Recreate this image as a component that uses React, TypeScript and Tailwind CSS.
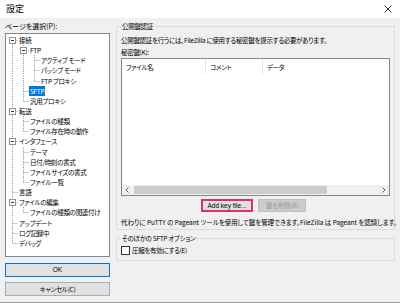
import React from 'react';

type Node = { t: string; l: number; kids?: boolean; last?: boolean; sel?: boolean };

const TREE: Node[] = [
  { t: '接続', l: 1, kids: true },
  { t: 'FTP', l: 2, kids: true },
  { t: 'アクティブ モード', l: 3 },
  { t: 'パッシブ モード', l: 3 },
  { t: 'FTP プロキシ', l: 3, last: true },
  { t: 'SFTP', l: 2, sel: true },
  { t: '汎用プロキシ', l: 2, last: true },
  { t: '転送', l: 1, kids: true },
  { t: 'ファイルの種類', l: 2 },
  { t: 'ファイル存在時の動作', l: 2, last: true },
  { t: 'インタフェース', l: 1, kids: true },
  { t: 'テーマ', l: 2 },
  { t: '日付/時刻の書式', l: 2 },
  { t: 'ファイルサイズの書式', l: 2 },
  { t: 'ファイル一覧', l: 2, last: true },
  { t: '言語', l: 1 },
  { t: 'ファイルの編集', l: 1, kids: true },
  { t: 'ファイルの種類の関連付け', l: 2, last: true },
  { t: 'アップデート', l: 1 },
  { t: 'ログ記録中', l: 1 },
  { t: 'デバッグ', l: 1, last: true },
];

const COL = 11;
const ROW_H = 10.15;

// which ancestor columns still need a vertical guide line
function guides() {
  const lastAt: Record<number, boolean> = {};
  return TREE.map((n) => {
    const g: boolean[] = [];
    for (let c = 1; c < n.l; c++) g.push(!lastAt[c]);
    lastAt[n.l] = !!n.last;
    return g;
  });
}

function Connector({ n, g, first }: { n: Node; g: boolean[]; first: boolean }) {
  const w = n.l * COL;
  const mid = 5.5;
  const cx = (n.l - 1) * COL + 5.5;
  const line = { stroke: '#a0a0a0', strokeWidth: 1, strokeDasharray: '1 1' };
  return (
    <svg width={w} height={ROW_H} className="shrink-0">
      {g.map((on, i) => on && <line key={i} x1={i * COL + 5.5} y1={0} x2={i * COL + 5.5} y2={ROW_H} {...line} />)}
      {!first && <line x1={cx} y1={0} x2={cx} y2={mid} {...line} />}
      {!n.last && <line x1={cx} y1={mid} x2={cx} y2={ROW_H} {...line} />}
      <line x1={cx} y1={mid} x2={w} y2={mid} {...line} />
      {n.kids && (
        <g>
          <rect x={cx - 3} y={mid - 3} width={6} height={6} fill="#fff" stroke="#919191" strokeWidth={1} />
          <line x1={cx - 1.5} y1={mid} x2={cx + 1.5} y2={mid} stroke="#333" strokeWidth={1} />
        </g>
      )}
    </svg>
  );
}

function Chevron({ dir }: { dir: 'l' | 'r' }) {
  return (
    <svg width="4" height="6" viewBox="0 0 4 6">
      <path d={dir === 'l' ? 'M3.5 0.5 L1 3 L3.5 5.5' : 'M0.5 0.5 L3 3 L0.5 5.5'} fill="none" stroke="#606060" strokeWidth="1" />
    </svg>
  );
}

export default function App() {
  const g = guides();
  const latin = "font-['Liberation_Sans','Noto_Sans_CJK_JP',sans-serif] tracking-normal";

  return (
    <div className="flex h-[303px] w-[400px] flex-col overflow-hidden bg-[#f0f0f0] font-['Noto_Sans_CJK_JP',sans-serif] text-[6.5px] leading-[10px] tracking-[-0.3px] text-black [font-feature-settings:'palt']">
      <div className="flex h-[18px] shrink-0 items-center justify-between bg-white pl-[6px] pr-[8px]">
        <span className="text-[9px] tracking-normal">設定</span>
        <svg width="8" height="8" viewBox="0 0 8 8">
          <path d="M0.5 0.5 L7.5 7.5 M7.5 0.5 L0.5 7.5" stroke="#333" strokeWidth="1" />
        </svg>
      </div>

      <div className="flex flex-1 gap-[6px] border-b border-[#a0a0a0] px-[5px] pt-[2px]">
        <div className="flex w-[105px] shrink-0 flex-col">
          <div className="flex h-[12px] items-center tracking-normal text-[7px]">ページを選択(P):</div>
          <div className="mt-[1px] h-[224px] border border-[#828790] bg-white pl-[1px] pt-[1px]">
            {TREE.map((n, i) => (
              <div key={n.t} className="flex h-[10.15px] items-center whitespace-nowrap">
                <Connector n={n} g={g[i]} first={i === 0} />
                <span className={`flex h-[10px] items-center px-[1px] ${n.sel ? 'bg-[#0078d7] text-white' : ''}`}>{n.t}</span>
              </div>
            ))}
          </div>
          <button className={`mt-[6px] h-[14px] border border-[#0078d7] bg-[#e1e1e1] ${latin}`}>OK</button>
          <button className="mt-[5px] h-[14px] border border-[#adadad] bg-[#e1e1e1]">キャンセル(C)</button>
        </div>

        <div className="flex min-w-0 flex-1 flex-col">
          <fieldset className="h-[210px] min-w-0 border border-[#dcdcdc] px-[4px]">
            <legend className="h-[12px] px-[1px] leading-[12px]">公開鍵認証</legend>
            <div className="mt-[3px] h-[10px] whitespace-nowrap">公開鍵認証を行うには、FileZilla に使用する秘密鍵を提示する必要があります。</div>
            <div className="mt-[2px] h-[10px]">秘密鍵(K):</div>
            <div className="mt-[1px] flex h-[138px] flex-col border border-[#828790] bg-white">
              <div className="flex h-[15px] items-center">
                <div className="flex h-full w-[84px] items-center border-r border-[#e5e5e5] pl-[4px]">ファイル名</div>
                <div className="flex h-full w-[57px] items-center border-r border-[#e5e5e5] pl-[4px]">コメント</div>
                <div className="flex h-full flex-1 items-center pl-[4px]">データ</div>
              </div>
              <div className="flex-1" />
              <div className="flex h-[10px] items-center bg-[#f0f0f0]">
                <div className="flex w-[10px] justify-center"><Chevron dir="l" /></div>
                <div className="ml-[2px] h-[8px] w-[193px] bg-[#cdcdcd]" />
                <div className="flex-1" />
                <div className="flex w-[11px] justify-center"><Chevron dir="r" /></div>
              </div>
            </div>
            <div className="mt-[3px] flex h-[13px] gap-[5px] pl-[80px]">
              <button className={`w-[52px] border-2 border-[#e0306a] bg-[#e1e1e1] text-[6.5px] leading-[9px] ${latin}`}>Add key file...</button>
              <button className="w-[48px] border border-[#bfbfbf] bg-[#cccccc] text-[6.5px] leading-[9px] text-[#9a9a9a]">鍵を削除(R)</button>
            </div>
            <div className="mt-[5px] h-[10px] whitespace-nowrap tracking-[-0.05px]">代わりに PuTTY の Pageant ツールを使用して鍵を管理できます。FileZilla は Pageant を認識します。</div>
          </fieldset>

          <fieldset className="mt-[2px] h-[29px] min-w-0 border border-[#dcdcdc] px-[4px]">
            <legend className="h-[12px] px-[1px] leading-[12px]">そのほかの SFTP オプション</legend>
            <div className="mt-[1px] flex h-[10px] items-center">
              <span className="h-[9px] w-[9px] border border-[#333] bg-white" />
              <span className="ml-[2px]">圧縮を有効にする(E)</span>
            </div>
          </fieldset>
        </div>
      </div>
    </div>
  );
}
